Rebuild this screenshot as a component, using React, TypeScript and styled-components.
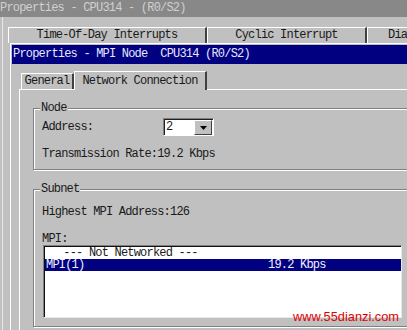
import React from 'react'
import styled, { createGlobalStyle } from 'styled-components'

const GlobalStyle = createGlobalStyle`
  html, body {
    margin: 0;
    padding: 0;
    background: #c0c0c0;
  }
  body {
    font-family: "Liberation Mono", "Courier New", monospace;
    font-size: 12px;
    letter-spacing: -0.8px;
    color: #1a1a1a;
  }
`

const Screen = styled.div`
  position: relative;
  width: 407px;
  height: 330px;
  overflow: hidden;
  background: #c0c0c0;
`

const OuterTitle = styled.div`
  height: 17px;
  line-height: 17px;
  background: #888888;
  color: #d0d0d0;
  white-space: pre;
`

const OuterFrame = styled.div`
  margin-left: 2px;
  border-left: 1px solid #e6e6e6;
  padding-top: 10px;
  height: 320px;
`

const OuterTabs = styled.div`
  display: flex;
  margin-left: 5px;
  height: 16px;
  width: 560px;
`

const OuterTab = styled.div<{ $w: number; $pad?: number }>`
  width: ${p => p.$w}px;
  flex: 0 0 auto;
  box-sizing: border-box;
  height: 16px;
  line-height: 15px;
  text-align: ${p => (p.$pad !== undefined ? 'left' : 'center')};
  padding-left: ${p => p.$pad ?? 0}px;
  border-top: 1px solid #fff;
  border-left: 1px solid #fff;
  border-right: 2px solid #404040;
  white-space: pre;
`

const InnerWindow = styled.div`
  margin-left: 7px;
  border-left: 1px solid #fff;
  border-top: 1px solid #fff;
  padding: 1px 0 0 1px;
  height: 300px;
`

const InnerTitle = styled.div`
  height: 19px;
  line-height: 19px;
  background: #000080;
  color: #e6e6ff;
  padding-left: 1px;
  white-space: pre;
`

const InnerBody = styled.div`
  padding: 7px 0 0 7px;
`

const TabStrip = styled.div`
  display: flex;
  align-items: flex-end;
  height: 18px;
  padding-left: 2px;
`

const PageTab = styled.div<{ $w: number; $active?: boolean }>`
  position: relative;
  z-index: 1;
  box-sizing: border-box;
  width: ${p => p.$w}px;
  height: ${p => (p.$active ? 19 : 16)}px;
  margin-bottom: ${p => (p.$active ? -1 : 0)}px;
  line-height: ${p => (p.$active ? 18 : 15)}px;
  text-align: center;
  background: #c0c0c0;
  border-top: 1px solid #fff;
  border-left: 1px solid #fff;
  border-right: 2px solid #404040;
`

const Panel = styled.div`
  border-top: 1px solid #fff;
  border-left: 1px solid #fff;
  padding: 18px 0 0 13px;
  height: 260px;
`

const Group = styled.div<{ $gap?: number }>`
  position: relative;
  width: 400px;
  margin-top: ${p => p.$gap ?? 0}px;
  border: 1px solid #808080;
  box-shadow: inset 1px 1px 0 #fff, 1px 1px 0 #fff;
  padding-left: 8px;
`

const GroupLabel = styled.span`
  position: absolute;
  top: -7px;
  left: 6px;
  line-height: 13px;
  padding: 0 1px;
  background: #c0c0c0;
`

const Row = styled.div<{ $top: number; $h?: number; $bottom?: number }>`
  display: flex;
  align-items: center;
  margin-top: ${p => p.$top}px;
  margin-bottom: ${p => p.$bottom ?? 0}px;
  height: ${p => p.$h ?? 13}px;
  white-space: pre;
`

const FieldLabel = styled.span`
  width: 121px;
`

const Combo = styled.div`
  display: flex;
  box-sizing: border-box;
  width: 51px;
  height: 18px;
  background: #fff;
  border-top: 1px solid #808080;
  border-left: 1px solid #808080;
  border-right: 1px solid #fff;
  border-bottom: 1px solid #fff;
  box-shadow: inset 1px 1px 0 #202020;
`

const ComboValue = styled.span`
  flex: 1;
  padding: 1px 0 0 2px;
  line-height: 14px;
`

const ComboButton = styled.div`
  box-sizing: border-box;
  width: 18px;
  height: 15px;
  margin: 1px 1px 0 0;
  background: #c0c0c0;
  border-top: 1px solid #fff;
  border-left: 1px solid #fff;
  border-right: 1px solid #404040;
  border-bottom: 1px solid #404040;
  display: flex;
  align-items: center;
  justify-content: center;
`

const ListBox = styled.div`
  box-sizing: border-box;
  width: 359px;
  height: 73px;
  margin-left: 1px;
  margin-bottom: 8px;
  background: #fff;
  border-top: 1px solid #808080;
  border-left: 1px solid #808080;
  border-right: 1px solid #e8e8e8;
  border-bottom: 1px solid #e8e8e8;
  box-shadow: inset 1px 1px 0 #101010;
  padding: 1px 0 0 1px;
`

const ListRow = styled.div<{ $selected?: boolean }>`
  display: grid;
  grid-template-columns: 170px 1fr;
  height: 12px;
  line-height: 12px;
  white-space: pre;
  background: ${p => (p.$selected ? '#000080' : 'transparent')};
  color: ${p => (p.$selected ? '#f0f0ff' : '#1a1a1a')};
`

const Cell = styled.span<{ $center?: boolean; $pad?: number }>`
  text-align: ${p => (p.$center ? 'center' : 'left')};
  padding-left: ${p => p.$pad ?? 1}px;
`

const Watermark = styled.div`
  position: absolute;
  left: 293px;
  top: 309px;
  font-family: "Liberation Sans", Arial, sans-serif;
  font-size: 12.8px;
  letter-spacing: 0;
  color: #e00000;
  line-height: 15px;
`

export default function App() {
  return (
    <Screen>
      <GlobalStyle />
      <OuterTitle>Properties - CPU314 - (R0/S2)</OuterTitle>
      <OuterFrame>
        <OuterTabs>
          <OuterTab $w={199}>Time-Of-Day Interrupts</OuterTab>
          <OuterTab $w={160}>Cyclic Interrupt</OuterTab>
          <OuterTab $w={150} $pad={20}>Diagnostics/Clock</OuterTab>
        </OuterTabs>
        <InnerWindow>
          <InnerTitle>Properties - MPI Node  CPU314 (R0/S2)</InnerTitle>
          <InnerBody>
            <TabStrip>
              <PageTab $w={53}>General</PageTab>
              <PageTab $w={133} $active>Network Connection</PageTab>
            </TabStrip>
            <Panel>
              <Group>
                <GroupLabel>Node</GroupLabel>
                <Row $top={9} $h={18}>
                  <FieldLabel>Address:</FieldLabel>
                  <Combo>
                    <ComboValue>2</ComboValue>
                    <ComboButton>
                      <svg width="7" height="4" viewBox="0 0 7 4">
                        <path d="M0 0h7L3.5 4z" fill="#000" />
                      </svg>
                    </ComboButton>
                  </Combo>
                </Row>
                <Row $top={11} $bottom={9}>Transmission Rate:19.2 Kbps</Row>
              </Group>
              <Group $gap={19}>
                <GroupLabel>Subnet</GroupLabel>
                <Row $top={15}>Highest MPI Address:126</Row>
                <Row $top={14}>MPI:</Row>
                <ListBox>
                  <ListRow>
                    <Cell $center>--- Not Networked ---</Cell>
                    <Cell />
                  </ListRow>
                  <ListRow $selected>
                    <Cell>MPI(1)</Cell>
                    <Cell $pad={53}>19.2 Kbps</Cell>
                  </ListRow>
                </ListBox>
              </Group>
            </Panel>
          </InnerBody>
        </InnerWindow>
      </OuterFrame>
      <Watermark>www.55dianzi.com</Watermark>
    </Screen>
  )
}
